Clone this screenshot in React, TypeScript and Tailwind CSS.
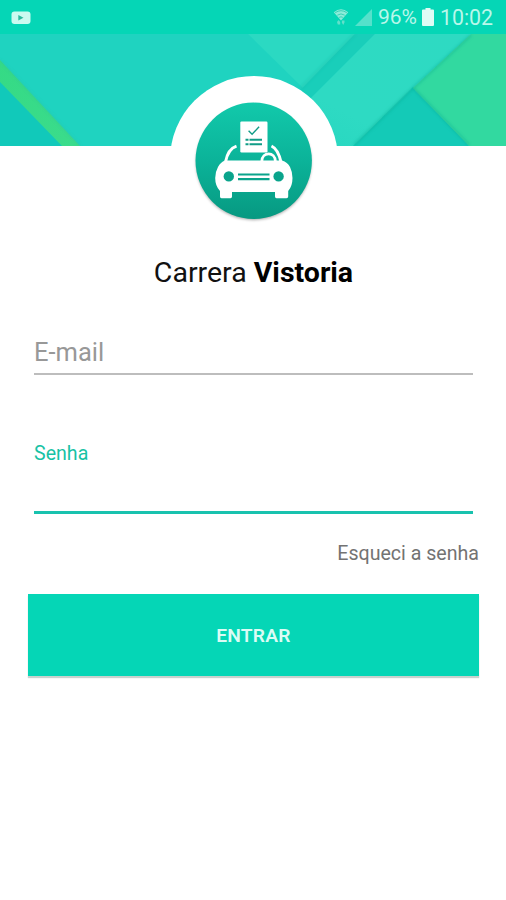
const StatusBar = () => (
  <div className="flex h-[34px] items-center justify-between bg-[#05d6b6] pl-[11px] pr-[12px] pt-px">
    <svg width="20" height="14" viewBox="0 0 20 14">
      <rect x="0.5" y="0.5" width="19" height="12.5" rx="3" fill="#cbfaf0" />
      <path d="M7.3 3.9v5.6l5.2-2.8z" fill="#2cbb9f" />
    </svg>

    <div className="flex items-center text-[21px] leading-none text-[#b9f7ea]">
      <svg width="16" height="18" viewBox="0 0 16 18" className="mr-[6px]">
        <path d="M.8 4.2Q8-1.6 15.2 4.2L8 12.5z" fill="#8decd9" />
        <path
          d="M2.2 4.7q5.8-4 11.6 0M4.3 7.2q3.7-2.6 7.4 0M6.2 9.4q1.8-1.2 3.6 0"
          fill="none"
          stroke="#32cdb2"
          strokeWidth="0.9"
        />
        <path d="M4 14l1.6-2 1.6 2v2.5H4.8zM9 12.5h2.5v2L10.2 17 8.8 14.5z" fill="#63dfca" />
      </svg>
      <svg width="17" height="17" viewBox="0 0 17 17" className="mr-[6px]">
        <path d="M17 0v17H0z" fill="#55e1cb" />
      </svg>
      <span className="w-[40px] whitespace-nowrap pt-px">96%</span>
      <svg width="12" height="18" viewBox="0 0 12 18" className="ml-[4px] mr-[6px]">
        <path d="M3.5 0h5v1.5H11q1 0 1 1V17q0 1-1 1H1q-1 0-1-1V2.5q0-1 1-1h2.5z" fill="#dffcf5" />
      </svg>
      <span className="w-[54px] whitespace-nowrap pt-px text-[21.3px]">10:02</span>
    </div>
  </div>
);

const Banner = () => (
  <svg width="506" height="112" viewBox="0 34 506 112" className="block">
    <defs>
      <linearGradient id="stripe" x1="0" y1="0" x2="1" y2="1">
        <stop offset="0" stopColor="#35da85" />
        <stop offset="1" stopColor="#3bdc8c" />
      </linearGradient>
      <linearGradient id="panel" x1="0" y1="1" x2="1" y2="0">
        <stop offset="0" stopColor="#25d6bf" />
        <stop offset="0.35" stopColor="#2edac3" />
        <stop offset="1" stopColor="#2edac2" />
      </linearGradient>
      <filter id="soft" x="-20%" y="-20%" width="140%" height="140%">
        <feGaussianBlur stdDeviation="1.5" />
      </filter>
    </defs>
    <rect y="34" width="506" height="112" fill="#1fd3c0" />
    <path d="M0 80V146H63z" fill="#11c9ba" />
    <path d="M0 60V82L62 146H80z" fill="url(#stripe)" />
    <path d="M0 60L80 146" stroke="#2fbf9a" strokeWidth="1.5" opacity="0.5" filter="url(#soft)" />
    <path d="M248 34H355L303 88z" fill="#2bd9c2" />
    <path d="M355 34H375L290 119L276 115z" fill="#19ceba" />
    <path d="M355 34L300 89" stroke="#12b9a5" strokeWidth="2" opacity="0.45" filter="url(#soft)" />
    <path d="M375 34H472L353 146H263z" fill="url(#panel)" />
    <path d="M413 87L353 146H469z" fill="#14cab7" />
    <path d="M471 34L413 88L469 146H506V34z" fill="#32d9a0" />
    <path
      d="M471 35L413 88L354 145M413 88L469 145"
      fill="none"
      stroke="#08aa91"
      strokeWidth="2"
      opacity="0.5"
      filter="url(#soft)"
    />
  </svg>
);

const Logo = () => (
  <svg width="168" height="168" viewBox="170 76 168 168" className="block">
    <defs>
      <linearGradient id="disc" x1="0" y1="0" x2="0" y2="1">
        <stop offset="0" stopColor="#12c9ab" />
        <stop offset="0.5" stopColor="#0bb399" />
        <stop offset="1" stopColor="#079981" />
      </linearGradient>
      <filter id="shadow" x="-10%" y="-10%" width="120%" height="120%">
        <feGaussianBlur stdDeviation="1.4" />
      </filter>
    </defs>
    <circle cx="254" cy="160" r="84" fill="#fff" />
    <circle cx="253.7" cy="162.5" r="57.5" fill="#000" opacity="0.35" filter="url(#shadow)" />
    <circle cx="253.7" cy="160.8" r="58.2" fill="url(#disc)" />
    {/* windscreen and steering wheel */}
    <path d="M225.5 162Q228 149 236.5 146.2M281 162Q278 149 271.5 146" fill="none" stroke="#fff" strokeWidth="3" />
    <path d="M261.8 161.5C262 151.3 275.2 151.3 275.4 161.5" fill="none" stroke="#fff" strokeWidth="2.8" />
    {/* checklist */}
    <rect x="240.3" y="121.5" width="27.2" height="31" rx="1.2" fill="#fff" />
    <path d="M248.6 130.8l3.5 3.4 7-7.4" fill="none" stroke="#109c87" strokeWidth="1.4" />
    <path d="M245.5 139.7h3M249.5 139.7h12.5M245.5 144.3h3M249.5 144.3h12.5" stroke="#109c87" strokeWidth="2" />
    {/* car body */}
    <path
      d="M225 160.5H282Q287.5 162 290 167Q292.5 172 292.5 178Q292.5 186 288.2 191V196.5Q288.2 198.3 286.5 198.3H276.5Q275 198.3 275 196.5V192H232V196.5Q232 198.3 230.5 198.3H221.5Q220 198.3 220 196.5V191Q215.2 186 215.2 178Q215.2 172 218 167Q220.5 162 225 160.5Z"
      fill="#fff"
    />
    <circle cx="228.8" cy="176.4" r="5.2" fill="#0aa48c" />
    <circle cx="278.6" cy="176.4" r="5.2" fill="#0aa48c" />
    <path d="M238 174.5h31.5M238 179.2h31.5" stroke="#0aa48c" strokeWidth="2.2" />
  </svg>
);

const App = () => {
  return (
    <div className="h-[900px] w-[506px] overflow-hidden bg-white font-['Roboto',sans-serif]">
      <StatusBar />
      <Banner />
      <div className="-mt-[70px] flex justify-center pl-[2px]">
        <Logo />
      </div>

      <h1 className="mt-[13px] pl-px text-center text-[28.5px] leading-8 text-[#111]">
        Carrera <b className="font-bold text-black">Vistoria</b>
      </h1>

      <form className="pl-[28px] pr-[27px]">
        <div className="mx-[6px] mt-[50px] h-[36px] border-b-2 border-[#bdbdbd] text-[25.5px] leading-[27px] text-[#989898]">
          E-mail
        </div>
        <div className="mx-[6px] mt-[66px] h-[73px] border-b-[3px] border-[#18c2ae] text-[19.6px] leading-[25px] text-[#18c2a5]">
          Senha
        </div>
        <div className="mt-[28px] h-[23px] text-right text-[19.6px] leading-6 text-[#737373]">
          Esqueci a senha
        </div>
        <button
          type="button"
          className="mt-[29px] block h-[82px] w-full bg-[#05d6b6] pt-[2px] text-[19.2px] font-semibold tracking-[0.2px] text-[#dbfcf5] shadow-[0_2px_1px_#c8d2ce]"
        >
          ENTRAR
        </button>
      </form>
    </div>
  );
};

export default App;
